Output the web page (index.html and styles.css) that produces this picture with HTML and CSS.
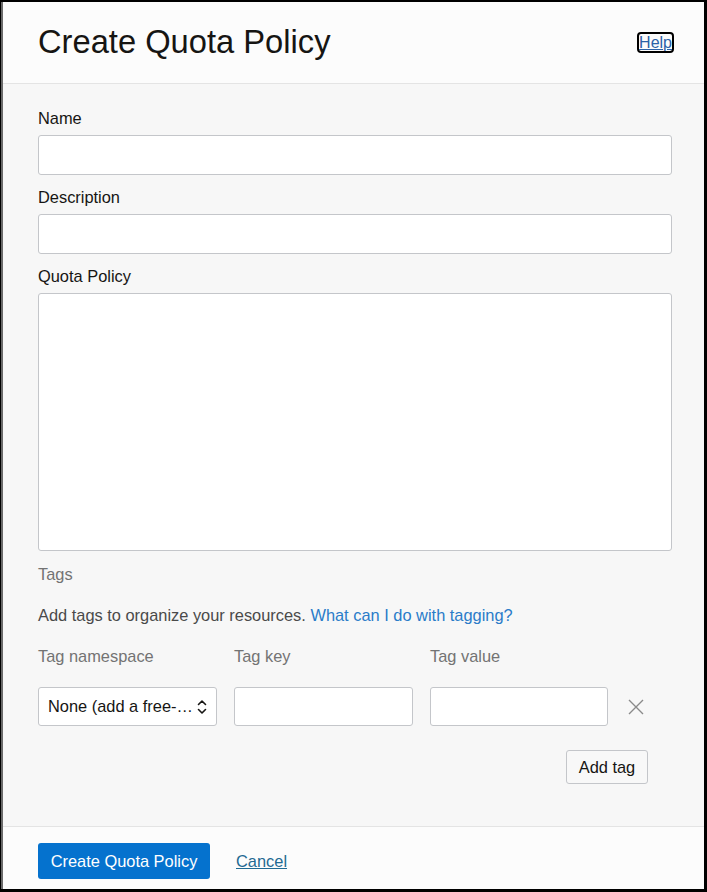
FILE: index.html
```html
<!DOCTYPE html>
<html lang="en">
<head>
<meta charset="utf-8">
<title>Create Quota Policy</title>
<link rel="stylesheet" href="styles.css">
</head>
<body>
<div class="frame">
  <div class="panel">
    <header class="head">
      <h1 class="title">Create Quota Policy</h1>
      <a class="help" href="#">Help</a>
    </header>
    <main class="body">
      <div class="field">
        <label class="label">Name</label>
        <input class="input" type="text">
      </div>
      <div class="field">
        <label class="label">Description</label>
        <input class="input" type="text">
      </div>
      <div class="field">
        <label class="label">Quota Policy</label>
        <textarea class="textarea"></textarea>
      </div>
      <div class="tags-title">Tags</div>
      <p class="tags-desc">Add tags to organize your resources. <a class="link" href="#">What can I do with tagging?</a></p>
      <div class="tag-grid">
        <div class="tag-label">Tag namespace</div>
        <div class="tag-label">Tag key</div>
        <div class="tag-label">Tag value</div>
        <div></div>
        <div class="select">
          <span class="select-text">None (add a free-…</span>
          <svg class="chev" width="10" height="18" viewBox="0 0 10 18"><path d="M1.5 6.5 L5 3 L8.5 6.5 M1.5 11.5 L5 15 L8.5 11.5" fill="none" stroke="#161513" stroke-width="1.6" stroke-linecap="round" stroke-linejoin="round"/></svg>
        </div>
        <input class="tag-input" type="text">
        <input class="tag-input" type="text">
        <div class="remove">
          <svg width="16" height="16" viewBox="0 0 16 16"><path d="M1 1 L15 15 M15 1 L1 15" stroke="#8a8a8a" stroke-width="1.4" fill="none"/></svg>
        </div>
      </div>
      <div class="add-row">
        <button class="btn-secondary" type="button">Add tag</button>
      </div>
    </main>
    <footer class="foot">
      <button class="btn-primary" type="button">Create Quota Policy</button>
      <a class="cancel" href="#">Cancel</a>
    </footer>
  </div>
</div>
</body>
</html>
```
FILE: styles.css
```css
* { box-sizing: border-box; }
html, body { margin: 0; padding: 0; }
body {
  font-family: "Liberation Sans", Arial, sans-serif;
  color: #161513;
  background: #000;
}
.frame {
  width: 707px;
  height: 892px;
  border-top: 2px solid #000;
  border-right: 3px solid #000;
  border-bottom: 3px solid #000;
  border-left: 1px solid #000;
}
.panel {
  height: 100%;
  display: flex;
  flex-direction: column;
  border-left: 2px solid #6a6a6a;
  background: #f7f7f7;
}
.head {
  height: 82px;
  padding: 21px 30px 0 35px;
  display: flex;
  justify-content: space-between;
  align-items: flex-start;
  background: #fcfcfc;
  border-bottom: 1px solid #e4e4e4;
}
.title {
  margin: 0;
  font-size: 32.7px;
  line-height: 37px;
  font-weight: normal;
  color: #161513;
}
.help {
  margin-top: 9px;
  font-size: 16px;
  line-height: 17px;
  color: #2b62a8;
  text-decoration: underline;
  border: 2px solid #000;
  border-radius: 4px;
  padding: 0;
}
.body {
  flex: 1;
  padding: 25px 32px 0 35px;
  font-size: 16.4px;
}
.field { margin-bottom: 13px; }
.label {
  display: block;
  font-size: 16.4px;
  line-height: 18px;
  margin-bottom: 8px;
  color: #161513;
}
.input, .textarea, .tag-input {
  display: block;
  width: 100%;
  height: 40px;
  border: 1px solid #c4c6ca;
  border-radius: 3px;
  background: #fff;
  font: inherit;
  margin: 0;
}
.textarea {
  height: 258px;
  resize: none;
}
.field:nth-child(3) { margin-bottom: 14px; }
.tags-title {
  font-size: 16.4px;
  line-height: 18px;
  color: #737373;
}
.tags-desc {
  margin: 23px 0 0;
  font-size: 16.4px;
  line-height: 18px;
  color: #4a4a4a;
}
.link { color: #2a7cc9; text-decoration: none; }
.tag-grid {
  margin-top: 23px;
  display: grid;
  grid-template-columns: 179px 179px 178px 40px;
  column-gap: 17px;
  row-gap: 22px;
  align-items: center;
}
.tag-label {
  font-size: 16.4px;
  line-height: 18px;
  color: #737373;
}
.select, .tag-input {
  height: 39px;
}
.select {
  display: flex;
  align-items: center;
  justify-content: space-between;
  padding: 0 9px 0 9px;
  border: 1px solid #c4c6ca;
  border-radius: 3px;
  background: #fff;
  font-size: 16.4px;
  color: #161513;
  white-space: nowrap;
  overflow: hidden;
}
.remove {
  display: flex;
  align-items: center;
  justify-content: flex-start;
  padding-left: 3px;
}
.add-row {
  width: 610px;
  display: flex;
  justify-content: flex-end;
  margin-top: 24px;
}
.btn-secondary {
  height: 34px;
  width: 82px;
  border: 1px solid #c4c6ca;
  border-radius: 3px;
  background: #f8f8f8;
  font: inherit;
  font-size: 16.4px;
  color: #161513;
  padding: 0;
}
.foot {
  height: 63px;
  border-top: 1px solid #e4e4e4;
  background: #fcfcfc;
  padding: 16px 0 0 35px;
  display: flex;
  align-items: flex-start;
  gap: 26px;
}
.btn-primary {
  height: 36px;
  width: 172px;
  border: none;
  border-radius: 3px;
  background: #0572ce;
  color: #fff;
  font: inherit;
  font-size: 16.4px;
  padding: 0;
}
.cancel {
  margin-top: 9px;
  font-size: 16.4px;
  line-height: 18px;
  color: #1f6a93;
  text-decoration: underline;
}
```
